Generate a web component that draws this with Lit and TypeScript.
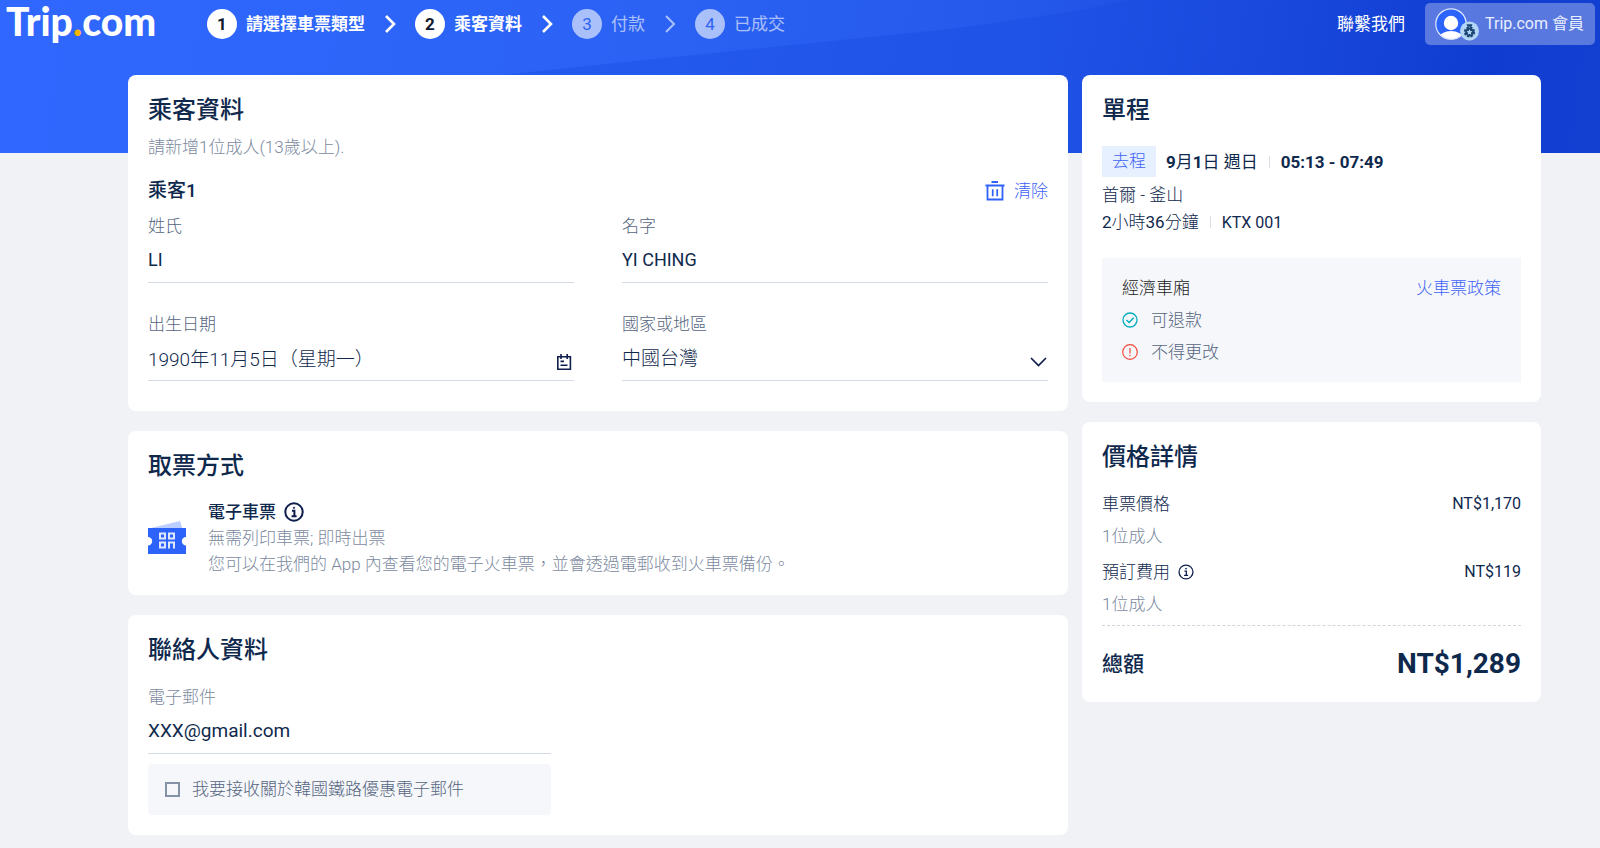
import { LitElement, html, css, nothing } from "lit";
import { customElement, state } from "lit/decorators.js";
import { classMap } from "lit/directives/class-map.js";

const base = css`
  :host {
    display: block;
    box-sizing: border-box;
  }
  *,
  *::before,
  *::after {
    box-sizing: border-box;
  }
  h2, h3, p, ol {
    margin: 0;
    padding: 0;
    list-style: none;
    font-size: inherit;
    font-weight: inherit;
  }
  a {
    color: inherit;
    text-decoration: none;
  }
  button {
    font: inherit;
    color: inherit;
    background: none;
    border: 0;
    padding: 0;
    cursor: pointer;
  }
  svg {
    display: block;
    flex: none;
  }
  .title {
    font-size: 24px;
    line-height: 30px;
    font-weight: 500;
  }
`;

const fieldStyles = css`
  .input {
    flex: 1;
    min-width: 0;
    height: 44px;
    padding: 0 0 2px;
    border: 0;
    outline: 0;
    background: none;
    appearance: none;
    color: #0f294d;
    font: inherit;
    font-size: 19px;
  }
`;

const infoIcon = (size: number, stroke: number) => html`
  <svg width=${size} height=${size} viewBox="0 0 20 20" fill="none" stroke="#0f1f4d" stroke-width=${stroke} aria-hidden="true">
    <circle cx="10" cy="10" r="8.7" />
    <path d="M8 8.8h2.4v5M7.6 14.2h5" />
    <circle cx="10" cy="5.8" r="0.7" fill="#0f1f4d" stroke-width="0.8" />
  </svg>
`;

interface Step {
  label: string;
  active: boolean;
}

@customElement("booking-header")
export class BookingHeader extends LitElement {
  static styles = [
    base,
    css`
      .bar {
        display: flex;
        align-items: center;
        height: 48px;
        padding: 0 5px 0 6px;
        color: #fff;
      }
      .logo {
        flex: none;
        align-self: flex-start;
        width: 201px;
        font-family: Lato, "Open Sans", sans-serif;
        font-weight: 900;
        font-size: 39px;
        line-height: 42px;
      }
      .dot {
        color: #ffb400;
      }
      .steps {
        display: flex;
        flex: 1;
        align-items: center;
      }
      .step {
        display: flex;
        align-items: center;
        gap: 9px;
        white-space: nowrap;
        font-weight: 700;
      }
      .number {
        display: grid;
        place-items: center;
        width: 30px;
        height: 30px;
        border-radius: 50%;
        background: #fff;
        color: #0f1a2e;
      }
      .arrow {
        margin: 0 18px 0 19px;
      }
      .pending {
        opacity: 0.6;
        font-weight: 400;
      }
      .pending .number {
        color: #2f62ee;
      }
      .dim {
        opacity: 0.6;
      }
      .contact {
        margin-right: 20px;
        white-space: nowrap;
      }
      .member {
        display: flex;
        align-items: center;
        gap: 6px;
        height: 42px;
        padding: 0 11px 0 9px;
        border-radius: 5px;
        background: rgba(255, 255, 255, 0.3);
        color: #e9efff;
        font-size: 16px;
        white-space: nowrap;
      }
    `,
  ];

  private steps: Step[] = [
    { label: "請選擇車票類型", active: true },
    { label: "乘客資料", active: true },
    { label: "付款", active: false },
    { label: "已成交", active: false },
  ];

  private arrow(dim: boolean) {
    return html`<svg class=${classMap({ arrow: true, dim })} width="13" height="20" viewBox="0 0 13 20" fill="none" stroke="#fff" stroke-width=${dim ? 2 : 2.6} aria-hidden="true">
      <path d="M2 2l8 8-8 8" />
    </svg>`;
  }

  render() {
    return html`
      <header class="bar">
        <a class="logo" href="#">Trip<span class="dot">.</span>com</a>
        <ol class="steps">
          ${this.steps.map(
            (s, i) => html`
              ${i > 0 ? this.arrow(!this.steps[i - 1].active) : nothing}
              <li class=${classMap({ step: true, pending: !s.active })}>
                <span class="number">${i + 1}</span><span>${s.label}</span>
              </li>
            `
          )}
        </ol>
        <a class="contact" href="#">聯繫我們</a>
        <button class="member" type="button">
          <svg width="45" height="34" viewBox="0 0 45 34" aria-hidden="true">
            <defs><clipPath id="face"><circle cx="17" cy="17" r="15.5" /></clipPath></defs>
            <circle cx="17" cy="17" r="15.5" fill="#2b63fb" />
            <g clip-path="url(#face)" fill="#fff">
              <circle cx="17" cy="16" r="7.2" />
              <ellipse cx="17" cy="31" rx="11.5" ry="7" />
            </g>
            <circle cx="17" cy="17" r="15.2" fill="none" stroke="#e3ebff" stroke-width="1.2" />
            <circle cx="35.5" cy="24" r="9.5" fill="#b3d6f7" />
            <path d="M32.5 17.2h6l-1 2.6h-4z" fill="#1e4675" />
            <circle cx="35.5" cy="25" r="4.4" fill="#1e4675" stroke="#1e4675" stroke-width="2.4" stroke-dasharray="2.3 1.15" />
            <path d="M35.5 22.2l.9 1.8 2 .3-1.5 1.4.4 2-1.8-1-1.8 1 .4-2-1.5-1.4 2-.3z" fill="#b3d6f7" />
          </svg>
          Trip.com 會員
        </button>
      </header>
    `;
  }
}

@customElement("passenger-form")
export class PassengerForm extends LitElement {
  static styles = [
    base,
    fieldStyles,
    css`
      .note {
        margin-top: 10px;
        color: #7c8aa0;
        font-weight: 300;
      }
      .head {
        display: flex;
        justify-content: space-between;
        margin: 20px 0 11px;
      }
      .name {
        font-size: 19px;
        font-weight: 500;
      }
      .clear {
        display: flex;
        align-items: center;
        gap: 9px;
        color: #3f62f8;
        font-weight: 300;
      }
      .fields {
        display: grid;
        grid-template-columns: 1fr 1fr;
        gap: 29px 48px;
      }
      .label {
        display: block;
        color: #55657e;
        font-weight: 300;
      }
      .control {
        display: flex;
        align-items: center;
        height: 45px;
        border-bottom: 1px solid #d5dbe6;
      }
      .latin {
        font-size: 18px;
      }
      .light {
        font-weight: 300;
      }
      .select {
        padding: 2px 0 0;
      }
      .icon {
        margin-top: 8px;
      }
    `,
  ];

  render() {
    return html`
      <h2 class="title">乘客資料</h2>
      <p class="note">請新增1位成人(13歲以上).</p>
      <div class="head">
        <h3 class="name">乘客1</h3>
        <button class="clear" type="button">
          <svg width="20" height="20" viewBox="0 0 20 20" fill="none" stroke="#2f62fb" aria-hidden="true">
            <path d="M6.5 1H13M.5 4.5h19M2.5 4.5v14h15v-14" stroke-width="1.8" />
            <path d="M7.7 8.2v7M12.2 8.2v7" stroke-width="1.7" />
          </svg>
          清除
        </button>
      </div>
      <div class="fields">
        <div>
          <label class="label" for="last">姓氏</label>
          <div class="control"><input class="input latin" id="last" value="LI" /></div>
        </div>
        <div>
          <label class="label" for="first">名字</label>
          <div class="control"><input class="input latin" id="first" value="YI CHING" /></div>
        </div>
        <div>
          <label class="label" for="birth">出生日期</label>
          <div class="control">
            <input class="input light" id="birth" value="1990年11月5日（星期一）" />
            <svg class="icon" width="20" height="18" viewBox="0 0 20 18" fill="none" stroke="#0f1f4d" stroke-width="1.6" aria-hidden="true">
              <path d="M3.8 3.8h12.6v12.4H3.8zM7 1v5M13.2 1v5M6.5 8.4H10M6.5 12.2h7" />
            </svg>
          </div>
        </div>
        <div>
          <label class="label" for="region">國家或地區</label>
          <div class="control">
            <select class="input light select" id="region"><option>中國台灣</option></select>
            <svg class="icon" width="20" height="12" viewBox="0 0 20 12" fill="none" stroke="#0f1f4d" stroke-width="1.7" aria-hidden="true">
              <path d="M3 2l7.5 7.5L18 2" />
            </svg>
          </div>
        </div>
      </div>
    `;
  }
}

@customElement("ticket-pickup")
export class TicketPickup extends LitElement {
  static styles = [
    base,
    css`
      .item {
        display: flex;
        align-items: center;
        gap: 22px;
        margin-top: 18px;
        line-height: 26px;
      }
      .text {
        color: #7c8aa0;
        font-weight: 300;
      }
      .kind {
        display: flex;
        align-items: center;
        gap: 8px;
        color: #0f294d;
        font-weight: 500;
      }
    `,
  ];

  render() {
    return html`
      <h2 class="title">取票方式</h2>
      <div class="item">
        <svg width="38" height="34" viewBox="0 0 38 34" aria-hidden="true">
          <path d="M3 7L32 0l2.5 8z" fill="#bccdff" />
          <path d="M0 7h38v9a4.2 4.2 0 0 0 0 8.4V33H0v-8.6a4.2 4.2 0 0 0 0-8.4z" fill="#2d63fb" />
          <g fill="none" stroke="#dfe8ff" stroke-width="2">
            <path d="M12 12.5h5v5h-5zM21 12.5h5v5h-5zM12 21.5h5v5h-5zM21 27.5v-6h5v6" />
          </g>
        </svg>
        <div class="text">
          <h3 class="kind">電子車票 ${infoIcon(20, 2)}</h3>
          <p>無需列印車票; 即時出票</p>
          <p>您可以在我們的 App 內查看您的電子火車票，並會透過電郵收到火車票備份。</p>
        </div>
      </div>
    `;
  }
}

@customElement("contact-form")
export class ContactForm extends LitElement {
  @state() private subscribed = false;

  static styles = [
    base,
    fieldStyles,
    css`
      .group {
        width: 403px;
        max-width: 100%;
        margin-top: 20px;
      }
      .label {
        display: block;
        color: #7c8aa0;
        font-weight: 300;
      }
      .email {
        display: block;
        width: 100%;
        height: 45px;
        border-bottom: 1px solid #d5dbe6;
      }
      .optin {
        display: flex;
        align-items: center;
        gap: 12px;
        margin-top: 10px;
        padding: 13px 17px 14px;
        border-radius: 4px;
        background: #f5f7fa;
        color: #55657e;
        font-weight: 300;
      }
      .check {
        appearance: none;
        width: 15px;
        height: 15px;
        margin: 0;
        border: 2px solid #8592a6;
      }
      .check:checked {
        background: #3264ff;
      }
    `,
  ];

  render() {
    return html`
      <h2 class="title">聯絡人資料</h2>
      <div class="group">
        <label class="label" for="email">電子郵件</label>
        <input class="input email" id="email" type="email" value="XXX@gmail.com" />
        <label class="optin">
          <input class="check" type="checkbox" .checked=${this.subscribed}
            @change=${(e: Event) => (this.subscribed = (e.target as HTMLInputElement).checked)} />
          我要接收關於韓國鐵路優惠電子郵件
        </label>
      </div>
    `;
  }
}

@customElement("trip-summary")
export class TripSummary extends LitElement {
  static styles = [
    base,
    css`
      .when {
        display: flex;
        align-items: center;
        margin: 21px 0 5px;
      }
      .tag {
        margin-right: 10px;
        padding: 0 10px;
        background: #e6f0ff;
        color: #3f62f8;
        font-weight: 300;
        line-height: 31px;
      }
      .bold {
        font-weight: 700;
      }
      .line {
        line-height: 27px;
        font-weight: 300;
      }
      .latin {
        font-weight: 400;
      }
      .split {
        display: inline-block;
        width: 1px;
        height: 12px;
        margin: 0 11px;
        background: #dadfe6;
      }
      .train {
        font-size: 16px;
      }
      .fare {
        margin-top: 22px;
        padding: 14px 20px;
        background: #f5f7fa;
        color: #55657e;
        font-weight: 300;
        line-height: 32px;
      }
      .row {
        display: flex;
        align-items: center;
        gap: 13px;
      }
      .class {
        flex: 1;
        color: #222;
      }
      .policy {
        color: #3f62f8;
      }
    `,
  ];

  render() {
    return html`
      <h2 class="title">單程</h2>
      <div class="when">
        <span class="tag">去程</span>
        <span><span class="bold">9</span>月<span class="bold">1</span>日 週日</span>
        <span class="split"></span>
        <span class="bold">05:13 - 07:49</span>
      </div>
      <p class="line">首爾 - 釜山</p>
      <p class="line"><span class="latin">2</span>小時<span class="latin">36</span>分鐘<span class="split"></span><span class="latin train">KTX 001</span></p>
      <div class="fare">
        <div class="row">
          <span class="class">經濟車廂</span>
          <a class="policy" href="#">火車票政策</a>
        </div>
        <div class="row">
          <svg width="16" height="16" viewBox="0 0 16 16" fill="none" stroke="#06aebd" stroke-width="1.3" aria-hidden="true">
            <circle cx="8" cy="8" r="7" />
            <path d="M4.5 8l2.6 2.5 4.6-4.8" stroke-width="1.5" />
          </svg>
          可退款
        </div>
        <div class="row">
          <svg width="16" height="16" viewBox="0 0 16 16" fill="none" stroke="#f5483b" stroke-width="1.2" aria-hidden="true">
            <circle cx="8" cy="8" r="7.3" />
            <path d="M8 4v5.5M8 10.7v1.5" />
          </svg>
          不得更改
        </div>
      </div>
    `;
  }
}

@customElement("price-detail")
export class PriceDetail extends LitElement {
  static styles = [
    base,
    css`
      .list {
        display: grid;
        gap: 4px;
        margin-top: 16px;
        padding-bottom: 5px;
        border-bottom: 1px dashed #d0d5de;
        line-height: 32px;
      }
      .row {
        display: flex;
        justify-content: space-between;
      }
      .item {
        display: flex;
        align-items: center;
        gap: 8px;
        font-weight: 300;
      }
      .price {
        font-size: 16px;
      }
      .people {
        color: #7c8aa0;
        font-weight: 300;
      }
      .total {
        display: flex;
        align-items: center;
        justify-content: space-between;
        margin-top: 20px;
        line-height: 36px;
      }
      .sum-label {
        font-size: 21px;
        font-weight: 500;
      }
      .sum {
        font-size: 28px;
        font-weight: 700;
      }
    `,
  ];

  render() {
    return html`
      <h2 class="title">價格詳情</h2>
      <div class="list">
        <div>
          <div class="row"><span class="item">車票價格</span><span class="price">NT$1,170</span></div>
          <p class="people">1位成人</p>
        </div>
        <div>
          <div class="row"><span class="item">預訂費用 ${infoIcon(16, 1.6)}</span><span class="price">NT$119</span></div>
          <p class="people">1位成人</p>
        </div>
      </div>
      <div class="total"><span class="sum-label">總額</span><span class="sum">NT$1,289</span></div>
    `;
  }
}

@customElement("app-root")
export class AppRoot extends LitElement {
  static styles = [
    base,
    css`
      :host {
        position: relative;
        min-height: 100vh;
        padding-bottom: 13px;
        background: linear-gradient(98deg, #3068ff 0%, #2b62f4 42%, #2458ea 64%, #1a49dc 80%, #103dd0 92%, #1440d2 100%) 0 0 / 100% 153px no-repeat #f0f2f5;
        color: #0f294d;
        font-family: Roboto, "Noto Sans CJK TC", sans-serif;
        font-size: 17px;
        line-height: 24px;
      }
      .wave {
        position: absolute;
        top: 0;
        left: 0;
        width: 100%;
        height: 153px;
      }
      .top,
      .page {
        position: relative;
      }
      .page {
        display: grid;
        grid-template-columns: 940fr 459fr;
        align-items: start;
        gap: 14px;
        padding: 27px 59px 0 128px;
      }
      .column {
        display: grid;
        gap: 20px;
      }
      .card {
        padding: 20px;
        border-radius: 8px;
        background: #fff;
      }
      .form {
        padding-bottom: 30px;
      }
      .pickup {
        padding-bottom: 18px;
      }
    `,
  ];

  render() {
    return html`
      <svg class="wave" viewBox="0 0 1600 153" preserveAspectRatio="none" aria-hidden="true">
        <defs>
          <linearGradient id="fade" x1="0" x2="1" y1="0" y2="0">
            <stop offset="0" stop-color="#0a38d8" stop-opacity="0.22" />
            <stop offset="0.5" stop-color="#0a38d8" stop-opacity="0.22" />
            <stop offset="1" stop-color="#0a38d8" stop-opacity="0" />
          </linearGradient>
        </defs>
        <path d="M500 75Q740 50 940 30Q1060 15 1130 0H1600V153H300Z" fill="url(#fade)" />
      </svg>
      <booking-header class="top" lang="zh-Hant"></booking-header>
      <main class="page" lang="zh-Hant">
        <div class="column">
          <passenger-form class="card form"></passenger-form>
          <ticket-pickup class="card pickup"></ticket-pickup>
          <contact-form class="card"></contact-form>
        </div>
        <aside class="column">
          <trip-summary class="card"></trip-summary>
          <price-detail class="card"></price-detail>
        </aside>
      </main>
    `;
  }
}
